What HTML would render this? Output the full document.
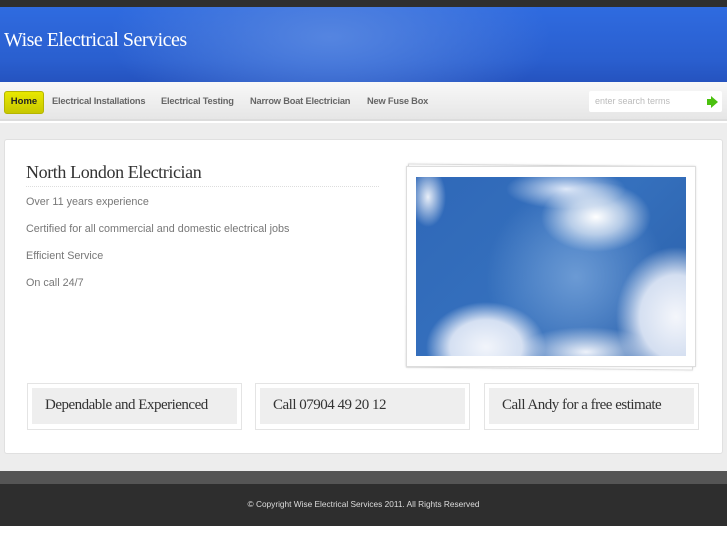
<!DOCTYPE html>
<html><head><style>
*{margin:0;padding:0;box-sizing:border-box}
body{width:727px;height:545px;background:#fff;font-family:"Liberation Sans",sans-serif;position:relative;overflow:hidden}
.top{position:absolute;left:0;top:0;width:727px;height:7px;background:#2f2f2f}
.hdr{position:absolute;left:0;top:7px;width:727px;height:75px;background:radial-gradient(ellipse 220px 90px at 330px 30px,#5585e0,rgba(60,110,220,0) 100%),linear-gradient(#2f6be0,#2a5fcf 70%,#2553bf);}
.hdr h1{position:absolute;left:4px;top:22px;font:normal 20px "Liberation Serif",serif;color:#fff;letter-spacing:-0.5px}
.nav{position:absolute;left:0;top:82px;width:727px;height:39px;background:linear-gradient(#f8f8f8,#e6e6e6);border-bottom:2px solid #dcdcdc}
.nav a{position:absolute;top:13px;line-height:12px;font-size:9.3px;font-weight:bold;color:#666;text-decoration:none;letter-spacing:-0.2px}
.home{position:absolute;left:4px;top:9px;width:40px;height:23px;background:linear-gradient(#e8e800,#c8c800);border-radius:3px;border:1px solid #b5b500;font-size:9.5px;font-weight:bold;color:#222;text-align:center;line-height:19px}
.search{position:absolute;left:589px;top:9px;width:133px;height:21px;background:#fff;border-radius:2px;font-size:9px;color:#bbb;padding:5px 0 0 6px}
.arr{position:absolute;right:4px;top:5px;width:0;height:0;border-left:7px solid #4bc10f;border-top:6px solid transparent;border-bottom:6px solid transparent}
.arrb{position:absolute;right:10px;top:8px;width:5px;height:6px;background:#4bc10f}
.bg{position:absolute;left:0;top:123px;width:727px;height:348px;background:#ededed}
.box{position:absolute;left:4px;top:139px;width:719px;height:315px;background:#fff;border-radius:3px;border:1px solid #e0e0e0}
h2{position:absolute;left:26px;top:162px;font:normal 18px "Liberation Serif",serif;color:#333;letter-spacing:-0.4px}
.rule{position:absolute;left:26px;top:186px;width:353px;border-top:1px dotted #ddd}
.p{position:absolute;left:26px;font-size:10.8px;color:#777}
.frame{position:absolute;background:#fff;border:1px solid #ddd;box-shadow:0 0 2px rgba(0,0,0,.1)}
.sky{position:absolute;left:416px;top:177px;width:270px;height:179px;overflow:hidden;background:
radial-gradient(ellipse 55px 35px at 180px 40px,#fff,rgba(255,255,255,.6) 50%,rgba(255,255,255,0)),
radial-gradient(ellipse 60px 20px at 150px 12px,rgba(240,245,255,.9),rgba(255,255,255,0)),
radial-gradient(ellipse 60px 70px at 260px 140px,#f4f6fb,rgba(230,236,248,.9) 60%,rgba(255,255,255,0)),
radial-gradient(ellipse 60px 45px at 70px 170px,#f2f5fb,rgba(230,236,248,.9) 60%,rgba(255,255,255,0)),
radial-gradient(ellipse 70px 25px at 170px 175px,#eef2fa,rgba(255,255,255,0)),
radial-gradient(ellipse 18px 30px at 12px 20px,#e8eef8,rgba(255,255,255,0)),
radial-gradient(ellipse 90px 90px at 160px 100px,#6b9ad4,rgba(70,120,200,0)),
linear-gradient(135deg,#2f68b8,#3570bd 50%,#2a5fa8)}
.card{position:absolute;top:383px;width:215px;height:47px;background:#fff;border:1px solid #e4e4e4}
.card div{position:absolute;left:4px;top:4px;right:4px;bottom:5px;background:#eee;font:normal 15px "Liberation Serif",serif;color:#333;padding:9px 0 0 13px;letter-spacing:-0.5px}
.fg{position:absolute;left:0;top:471px;width:727px;height:13px;background:#555}
.fd{position:absolute;left:0;top:484px;width:727px;height:42px;background:#2e2e2e;color:#ddd;font-size:8.3px;text-align:center;padding-top:15px}
</style></head><body>
<div class="top"></div>
<div class="hdr"><h1>Wise Electrical Services</h1></div>
<div class="nav">
<div class="home">Home</div>
<a style="left:52px">Electrical Installations</a>
<a style="left:161px">Electrical Testing</a>
<a style="left:250px">Narrow Boat Electrician</a>
<a style="left:367px">New Fuse Box</a>
<div class="search">enter search terms<div class="arrb"></div><div class="arr"></div></div>
</div>
<div class="bg"></div>
<div class="box"></div>
<h2>North London Electrician</h2>
<div class="rule"></div>
<div class="p" style="top:196px">Over 11 years experience</div>
<div class="p" style="top:223px">Certified for all commercial and domestic electrical jobs</div>
<div class="p" style="top:250px">Efficient Service</div>
<div class="p" style="top:277px">On call 24/7</div>
<div class="frame" style="left:407px;top:165px;width:287px;height:204px;transform:rotate(0.6deg)"></div>
<div class="frame" style="left:406px;top:166px;width:290px;height:201px"></div>
<div class="sky"></div>
<div class="card" style="left:27px"><div>Dependable and Experienced</div></div>
<div class="card" style="left:255px"><div>Call 07904 49 20 12</div></div>
<div class="card" style="left:484px"><div>Call Andy for a free estimate</div></div>
<div class="fg"></div>
<div class="fd">© Copyright Wise Electrical Services 2011. All Rights Reserved</div>
</body></html>
